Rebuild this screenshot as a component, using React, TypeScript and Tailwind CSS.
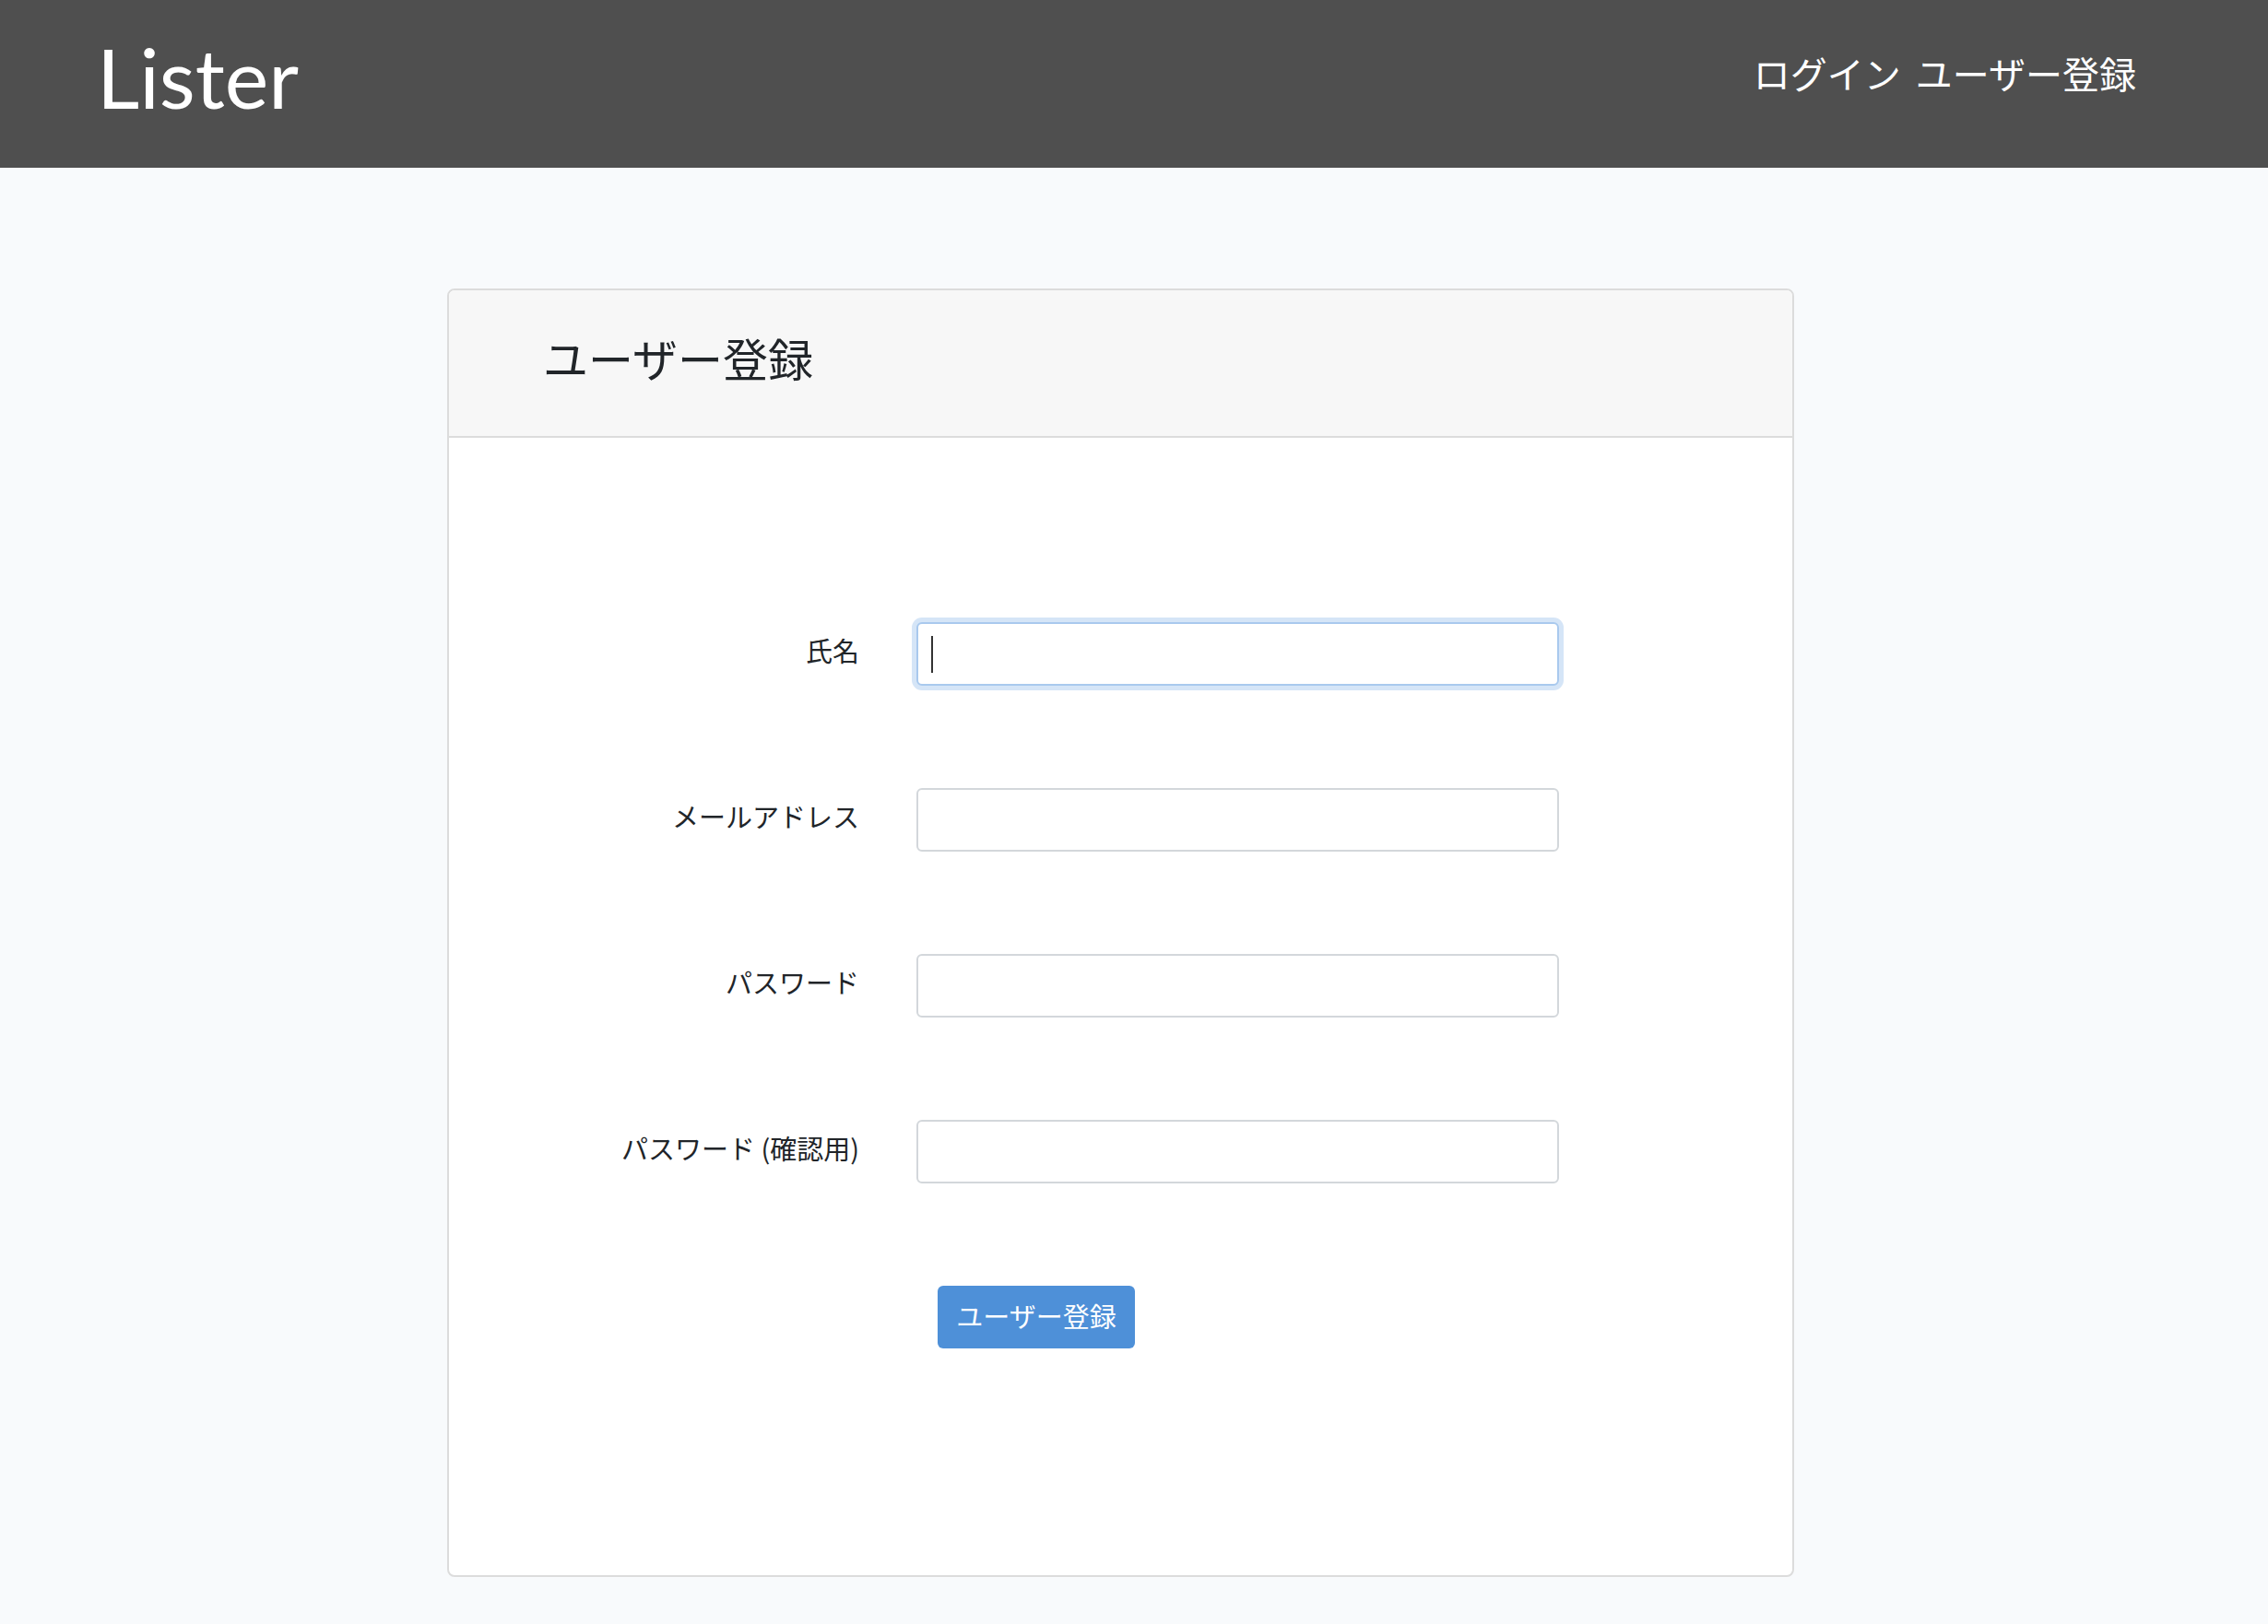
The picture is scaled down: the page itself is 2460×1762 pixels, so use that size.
import React from "react";

const jp = { fontFamily: '"Noto Sans CJK JP", "Noto Sans", sans-serif' };

function Row({ label, focused }: { label: string; focused?: boolean }) {
  return (
    <div className="flex items-center">
      <div className="w-[445px] text-right text-[29px] text-[#212529] leading-none pb-[8px]" style={jp}>
        {label}
      </div>
      <div className="ml-[62px] relative w-[697px] h-[69px]">
        <input
          className={
            "w-full h-full rounded-[6px] bg-white outline-none border-2 " +
            (focused
              ? "border-[#a9c9ee] shadow-[0_0_0_5px_#d5e5f7]"
              : "border-[#d3d7db]")
          }
          type="text"
          readOnly
        />
        {focused && (
          <span className="absolute left-[16px] top-[15px] w-[2px] h-[40px] bg-[#333]" />
        )}
      </div>
    </div>
  );
}

export default function App() {
  return (
    <div className="min-h-[1762px] bg-[#f8fafc]">
      <header className="h-[182px] bg-[#4f4f4f] flex items-center justify-between pl-[105px] pr-[143px]">
        <div
          className="text-white text-[90px] leading-none mb-[16px]"
          style={{ fontFamily: '"Lato", "Noto Sans", sans-serif' }}
        >
          Lister
        </div>
        <nav className="flex gap-[16px] text-white text-[40px] leading-none mb-[24px]" style={jp}>
          <a>ログイン</a>
          <a>ユーザー登録</a>
        </nav>
      </header>
      <div className="pt-[131px] pl-[485px]">
        <div className="w-[1461px] h-[1398px] bg-white border-2 border-[#dcdcdc] rounded-[8px] overflow-hidden flex flex-col">
          <div className="h-[160px] bg-[#f7f7f7] border-b-2 border-[#dcdcdc] flex items-center pl-[102px] pb-[14px]">
            <h1 className="text-[49px] text-[#212529] leading-none" style={jp}>
              ユーザー登録
            </h1>
          </div>
          <div className="pt-[200px] flex flex-col gap-[111px]">
            <Row label="氏名" focused />
            <Row label="メールアドレス" />
            <Row label="パスワード" />
            <Row label="パスワード (確認用)" />
            <div className="pl-[530px]">
              <button
                className="w-[214px] h-[68px] rounded-[6px] bg-[#4e90d8] text-white text-[29px] leading-none pb-[4px]"
                style={jp}
              >
                ユーザー登録
              </button>
            </div>
          </div>
        </div>
      </div>
    </div>
  );
}
